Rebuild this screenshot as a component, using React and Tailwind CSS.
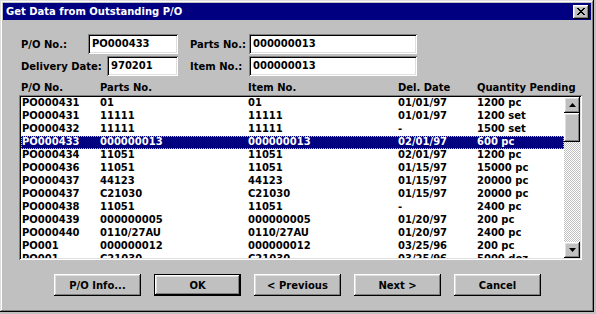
import React from 'react';

const rows = [
  ['PO000431', '01', '01', '01/01/97', '1200 pc'],
  ['PO000431', '11111', '11111', '01/01/97', '1200 set'],
  ['PO000432', '11111', '11111', '-', '1500 set'],
  ['PO000433', '000000013', '000000013', '02/01/97', '600 pc'],
  ['PO000434', '11051', '11051', '02/01/97', '1200 pc'],
  ['PO000436', '11051', '11051', '01/15/97', '15000 pc'],
  ['PO000437', '44123', '44123', '01/15/97', '20000 pc'],
  ['PO000437', 'C21030', 'C21030', '01/15/97', '20000 pc'],
  ['PO000438', '11051', '11051', '-', '2400 pc'],
  ['PO000439', '000000005', '000000005', '01/20/97', '200 pc'],
  ['PO000440', '0110/27AU', '0110/27AU', '01/20/97', '2400 pc'],
  ['PO001', '000000012', '000000012', '03/25/96', '200 pc'],
  ['PO001', 'C21030', 'C21030', '03/25/96', '5000 doz'],
];

const raised =
  'shadow-[inset_-1px_-1px_0_#000,inset_1px_1px_0_#fff,inset_-2px_-2px_0_#808080,inset_2px_2px_0_#dfdfdf]';
const sunken =
  'shadow-[inset_1px_1px_0_#808080,inset_-1px_-1px_0_#fff,inset_2px_2px_0_#000,inset_-2px_-2px_0_#dfdfdf]';

function Field({ value, width }) {
  return (
    <div className={`${width} h-[20px] bg-white ${sunken} pl-[4px] leading-[20px]`}>{value}</div>
  );
}

function Button({ children, isDefault }) {
  const frame = isDefault
    ? 'shadow-[inset_0_0_0_1px_#000,inset_-2px_-2px_0_#000,inset_2px_2px_0_#fff,inset_-3px_-3px_0_#808080,inset_3px_3px_0_#dfdfdf]'
    : raised;
  return (
    <div className={`w-[87px] h-[22px] ${frame} flex items-center justify-center leading-[11px]`}>
      {children}
    </div>
  );
}

function Arrow({ up }) {
  return (
    <div className={`h-[16px] bg-[#c0c0c0] ${raised} flex items-center justify-center`}>
      <svg width="7" height="4" viewBox="0 0 7 4">
        {up ? <polygon points="3.5,0 7,4 0,4" fill="#000" /> : <polygon points="0,0 7,0 3.5,4" fill="#000" />}
      </svg>
    </div>
  );
}

export default function App() {
  return (
    <div className="w-[596px] h-[314px] bg-[#c0c0c0] font-['DejaVu_Sans',sans-serif] font-bold text-[10px] text-black">
      <div className="w-[594px] h-[312px] p-[3px] flex flex-col shadow-[inset_-1px_-1px_0_#000,inset_1px_1px_0_#dfdfdf,inset_-2px_-2px_0_#808080,inset_2px_2px_0_#fff]">
        {/* Title bar */}
        <div className="h-[17px] bg-[#000080] text-white flex items-center pl-[3px] pr-[2px]">
          <span className="leading-[17px]">Get Data from Outstanding P/O</span>
          <div className={`ml-auto w-[16px] h-[14px] bg-[#c0c0c0] ${raised} flex items-center justify-center`}>
            <svg width="8" height="7" viewBox="0 0 8 7">
              <path d="M0 0h2v1h1v1h2v-1h1v-1h2v1h-1v1h-1v1h-1v1h1v1h1v1h1v1h-2v-1h-1v-1h-2v1h-1v1h-2v-1h1v-1h1v-1h1v-1h-1v-1h-1v-1h-1z" fill="#000" />
            </svg>
          </div>
        </div>

        <div className="pl-[18px] flex flex-col">
          {/* Form */}
          <div className="mt-[14px] flex items-center h-[20px]">
            <div className="w-[67px]">P/O No.:</div>
            <Field value="PO000433" width="w-[90px]" />
            <div className="ml-[12px] w-[59px]">Parts No.:</div>
            <Field value="000000013" width="w-[168px]" />
          </div>
          <div className="mt-[2px] flex items-center h-[20px]">
            <div className="w-[86px]">Delivery Date:</div>
            <Field value="970201" width="w-[71px]" />
            <div className="ml-[12px] w-[59px]">Item No.:</div>
            <Field value="000000013" width="w-[168px]" />
          </div>

          {/* Column headers */}
          <div className="mt-[6px] h-[13px] leading-[11px] flex">
            <div className="w-[79px]">P/O No.</div>
            <div className="w-[148px]">Parts No.</div>
            <div className="w-[150px]">Item No.</div>
            <div className="w-[79px]">Del. Date</div>
            <div>Quantity Pending</div>
          </div>

          {/* List */}
          <div className={`-ml-[2px] w-[563px] h-[165px] bg-white ${sunken} p-[2px] flex`}>
            <div className="flex-1 overflow-hidden">
              {rows.map((r, i) => {
                const sel = i === 3;
                return (
                  <div
                    key={i}
                    className={`h-[13px] leading-[11px] flex pl-[1px] whitespace-nowrap ${
                      sel ? 'bg-[#000080] text-white outline-1 outline-dotted outline-[#c0c080] -outline-offset-1' : ''
                    }`}
                  >
                    <div className="w-[78px]">{r[0]}</div>
                    <div className="w-[148px]">{r[1]}</div>
                    <div className="w-[150px]">{r[2]}</div>
                    <div className="w-[79px]">{r[3]}</div>
                    <div>{r[4]}</div>
                  </div>
                );
              })}
            </div>
            <div className="w-[16px] flex flex-col">
              <Arrow up />
              <div className="flex-1 bg-[repeating-conic-gradient(#c0c0c0_0_25%,#fff_0_50%)] bg-[length:2px_2px]">
                <div className={`h-[29px] bg-[#c0c0c0] ${raised}`} />
              </div>
              <Arrow />
            </div>
          </div>

          {/* Buttons */}
          <div className="mt-[14px] ml-[33px] flex gap-[13px]">
            <Button>P/O Info...</Button>
            <Button isDefault>OK</Button>
            <Button>&lt; Previous</Button>
            <Button>Next &gt;</Button>
            <Button>Cancel</Button>
          </div>
        </div>
      </div>
    </div>
  );
}
